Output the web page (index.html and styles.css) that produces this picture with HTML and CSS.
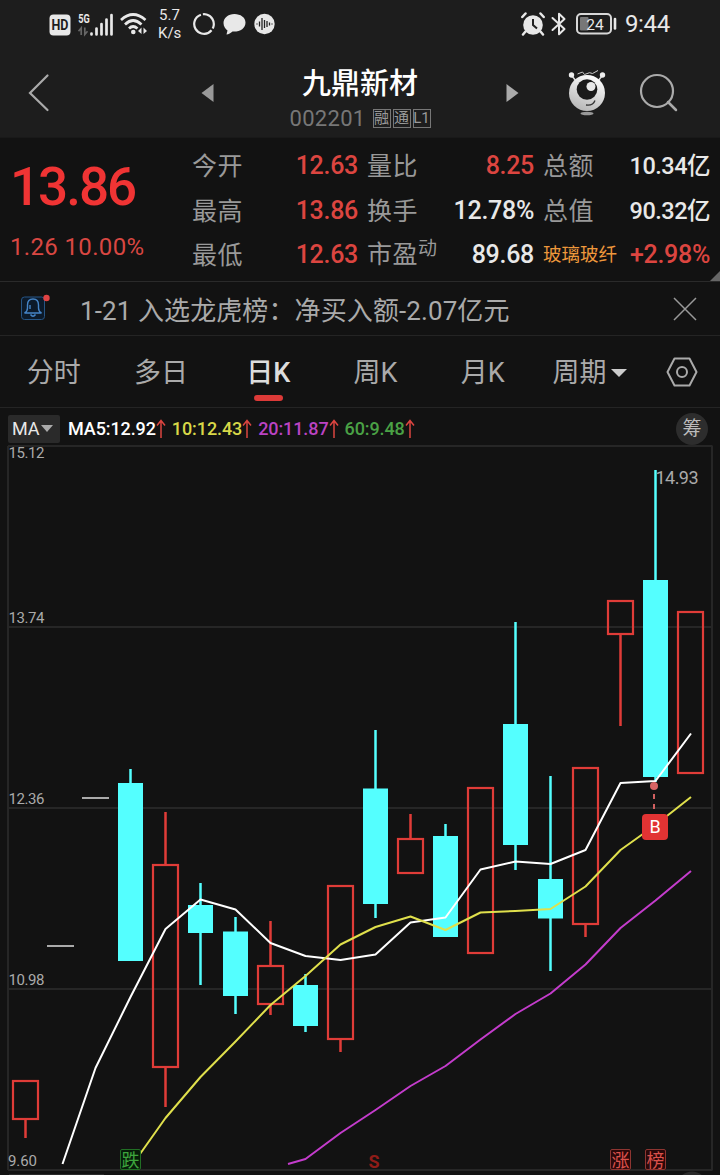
FILE: index.html
```html
<!DOCTYPE html>
<html lang="zh-CN">
<head>
    <meta charset="UTF-8">
    <meta name="viewport" content="width=device-width, initial-scale=1.0">
    <title>九鼎新材 002201</title>
    <link rel="stylesheet" href="styles.css">
</head>
<body>
    <header class="header">
        <div class="status-bar">
            <div class="status-left">
                <svg class="icon-hd" width="22" height="22" viewBox="0 0 22 22"><rect x="0.5" y="0.5" width="21" height="21" rx="4" fill="#e8e8e8"/><text x="11" y="15.7" text-anchor="middle" textLength="17" lengthAdjust="spacingAndGlyphs" font-size="14" font-weight="700" fill="#1d1d1d">HD</text></svg>
                <svg class="icon-signal" width="36" height="28" viewBox="0 -3 36 28">
                    <text x="0.3" y="10" textLength="11.500" lengthAdjust="spacingAndGlyphs" font-size="12" font-weight="700" fill="#e8e8e8">5G</text>
                    <path d="M3.2 22V15L0.5 18.2M6.8 14.5v7l2.7-3.2" stroke="#666" stroke-width="1.7" fill="none"/>
                    <path d="M13.5 20.500v1M18.500 15.500V21.500M23.500 11V21.500M28.500 6.500V21.500M33.500 2V21.500" stroke="#e8e8e8" stroke-width="2.700" stroke-linecap="round"/>
                </svg>
                <svg class="icon-wifi" width="28" height="24" viewBox="0 0 28 24">
                    <g fill="none" stroke="#e8e8e8" stroke-width="2.7"><path d="M1 8Q13 -3 25.500 8"/><path d="M5 12.500Q13 4.500 21.500 12.500"/><path d="M9 16.500Q13 12.500 17.500 16.500"/></g>
                    <circle cx="13.300" cy="20" r="2.300" fill="#e8e8e8"/>
                    <path d="M21.500 15.500v6.500l-3.500-3M23.500 22v-6.500l3.500 3.500" fill="#e8e8e8"/>
                </svg>
                <div class="net-speed">5.7<br>K/s</div>
                <svg class="icon-ring" width="22" height="24" viewBox="0 0 22 24"><circle cx="11" cy="12" r="9.800" fill="none" stroke="#e8e8e8" stroke-width="2.200" stroke-dasharray="17.500 2 36 2 4.100 0" transform="rotate(-75 11 12)"/></svg>
                <svg class="icon-chat" width="23" height="24" viewBox="0 0 23 24"><path d="M11.500 2C5 2 0.500 6 0.500 11c0 3.500 2 6 4 7.500L3.500 22.500c2 0 4.500-1.500 6-3 7.500 0.500 13-3 13-9C22.500 5.500 17.500 2 11.500 2z" fill="#e8e8e8"/></svg>
                <svg class="icon-sound" width="21" height="24" viewBox="0 0 21 24"><circle cx="10.500" cy="12" r="10.200" fill="#e8e8e8"/><path d="M3 11.500v1M5.500 9.500v5M8 6v12M10.500 8v8M13 9v6M15.500 10.500v3M18 11.500v1" stroke="#222" stroke-width="1.300"/></svg>
            </div>
            <div class="status-right">
                <svg class="icon-alarm" width="24" height="24" viewBox="0 0 24 24"><circle cx="12" cy="13" r="9.800" fill="#e8e8e8"/><path d="M4.500 1.500L1.300 5M19.500 1.500L22.700 5M4.500 19.500l-2.500 3M19.500 19.500l2.500 3" stroke="#e8e8e8" stroke-width="2.500" stroke-linecap="round"/><path d="M12 7v6l4 3.500" stroke="#222" stroke-width="2" fill="none"/></svg>
                <svg class="icon-bluetooth" width="16" height="24" viewBox="0 0 16 24"><path d="M1.500 6L13.500 17L8 22.200V1.800L13.500 7L1.500 18" fill="none" stroke="#e8e8e8" stroke-width="2" stroke-linejoin="round" stroke-linecap="round"/></svg>
                <svg class="icon-battery" width="41" height="22" viewBox="0 0 41 22"><rect x="1" y="1" width="34" height="19.500" rx="4" fill="none" stroke="#d8d8d8" stroke-width="2"/><rect x="4" y="4" width="8.500" height="13.500" rx="1" fill="#777"/><path d="M39 6v9.500" stroke="#e8e8e8" stroke-width="2.600" stroke-linecap="round"/><text x="19" y="16.500" text-anchor="middle" font-size="15.500" fill="#e8e8e8">24</text></svg>
                <span class="clock">9:44</span>
            </div>
        </div>
        <div class="title-bar">
            <svg class="back" width="22" height="40" viewBox="0 0 22 40"><path d="M19.500 2.500L2 20L19.500 37" fill="none" stroke="#aaa" stroke-width="2.200" stroke-linecap="round"/></svg>
            <svg class="prev" width="13" height="20" viewBox="0 0 13 20"><path d="M12.500 1v18L0.500 10z" fill="#999"/></svg>
            <div class="stock-title">
                <div class="stock-name">九鼎新材</div>
                <div class="stock-code"><span class="code">002201</span><span class="tag">融</span><span class="tag">通</span><span class="tag">L1</span></div>
            </div>
            <svg class="next" width="13" height="20" viewBox="0 0 13 20"><path d="M0.500 1v18L12.500 10z" fill="#aaa"/></svg>
            <svg class="mascot" width="38" height="46" viewBox="0 0 38 46">
                <defs><linearGradient id="ball" x1="0.7" y1="0" x2="0.3" y2="1"><stop offset="0" stop-color="#fff"/><stop offset="1" stop-color="#b5b5b5"/></linearGradient></defs>
                <path d="M4 6l4 5M34 6l-4 5" stroke="#ddd" stroke-width="1.500"/>
                <circle cx="3.500" cy="5" r="2.700" fill="#eee"/><circle cx="34.500" cy="5" r="2.700" fill="#eee"/>
                <path d="M9.500 4l5-2 2 2.500 5-1.800 3 .8 5.500-3" fill="none" stroke="#ccc" stroke-width="1"/>
                <circle cx="19" cy="23" r="18" fill="url(#ball)"/>
                <circle cx="19" cy="19.500" r="10.300" fill="#1a1a1a"/><circle cx="23" cy="16.500" r="4.500" fill="#e8e8e8"/>
                <path d="M18 35q7 1 9-4.500" fill="none" stroke="#333" stroke-width="1.300"/>
                <ellipse cx="19" cy="43.500" rx="6.500" ry="1.700" fill="#999"/>
            </svg>
            <svg class="search" width="40" height="40" viewBox="0 0 40 40"><circle cx="18" cy="18" r="16" fill="none" stroke="#aaa" stroke-width="2.200"/><path d="M29 29l8 8" stroke="#aaa" stroke-width="2.500" stroke-linecap="round"/></svg>
        </div>
    </header>

    <section class="quote">
        <div class="price-box">
            <div class="price">13.86</div>
            <div class="change">1.26 10.00%</div>
        </div>
        <div class="stats">
            <div class="stat"><span class="label">今开</span><span class="value red">12.63</span></div>
            <div class="stat"><span class="label">量比</span><span class="value red">8.25</span></div>
            <div class="stat"><span class="label">总额</span><span class="value money">10.34亿</span></div>
            <div class="stat"><span class="label">最高</span><span class="value red">13.86</span></div>
            <div class="stat"><span class="label">换手</span><span class="value">12.78%</span></div>
            <div class="stat"><span class="label">总值</span><span class="value money">90.32亿</span></div>
            <div class="stat"><span class="label">最低</span><span class="value red">12.63</span></div>
            <div class="stat"><span class="label">市盈<span class="sup">动</span></span><span class="value">89.68</span></div>
            <div class="stat"><span class="sector">玻璃玻纤</span><span class="value red">+2.98%</span></div>
        </div>
        <span class="corner"></span>
    </section>

    <section class="notice">
        <svg class="bell" width="30" height="30" viewBox="0 0 30 30">
            <rect x="1.500" y="5" width="23" height="22.500" rx="3" fill="#0c1a2a" stroke="#265585"/>
            <path d="M4.500 21q3-1.500 3-5v-3q0-6 5.500-6t5.500 6v3q0 3.500 3 5zM10.500 22.500q2.500 3.500 5 0M10 13v4" fill="none" stroke="#4585c8" stroke-width="1.400"/>
            <circle cx="26.500" cy="6" r="3.200" fill="#e04343"/>
        </svg>
        <span class="notice-text">1-21 入选龙虎榜：<span class="notice-detail">净买入额-2.07亿元</span></span>
        <svg class="close" width="24" height="24" viewBox="0 0 24 24"><path d="M1 1l22 22M23 1L1 23" stroke="#999" stroke-width="1.500"/></svg>
    </section>

    <nav class="tabs">
        <span class="tab">分时</span>
        <span class="tab">多日</span>
        <span class="tab active">日K</span>
        <span class="tab">周K</span>
        <span class="tab">月K</span>
        <span class="tab period">周期<i class="caret"></i></span>
        <svg class="settings" width="32" height="30" viewBox="0 0 32 30"><path d="M8.500 1.500h15L30.500 15l-7 13.500h-15L1.500 15z" fill="none" stroke="#aaa" stroke-width="2" stroke-linejoin="round"/><circle cx="16" cy="15" r="5" fill="none" stroke="#aaa" stroke-width="2"/></svg>
    </nav>

    <div class="ma-bar">
        <span class="ma-select">MA<i class="caret small"></i></span>
        <span class="ma ma5">MA5:12.92</span><svg class="up" width="10" height="20" viewBox="0 0 10 20"><path d="M5 19V2M1 6.500L5 1.500l4 5"/></svg>
        <span class="ma ma10">10:12.43</span><svg class="up" width="10" height="20" viewBox="0 0 10 20"><path d="M5 19V2M1 6.500L5 1.500l4 5"/></svg>
        <span class="ma ma20">20:11.87</span><svg class="up" width="10" height="20" viewBox="0 0 10 20"><path d="M5 19V2M1 6.500L5 1.500l4 5"/></svg>
        <span class="ma ma60">60:9.48</span><svg class="up" width="10" height="20" viewBox="0 0 10 20"><path d="M5 19V2M1 6.500L5 1.500l4 5"/></svg>
        <span class="chip">筹</span>
    </div>

    <svg class="chart" width="720" height="730" viewBox="0 445 720 730">
        <!-- grade -->
        <path class="grid" d="M8 446H712.500M8 627H712.500M8 808H712.500M8 989H712.500M8 1170H712.500M8 446V1170M712 446V1170"/>
        <path d="M9 1174.500H104" stroke="#2a2a2a"/>
        <circle cx="692" cy="1187" r="15.500" fill="#2a2a2a"/>
        <g class="axis">
            <text x="8.500" y="457.500" textLength="36">15.12</text>
            <text x="8.500" y="623" textLength="36">13.74</text>
            <text x="8.500" y="804" textLength="36">12.36</text>
            <text x="8.500" y="985" textLength="36">10.98</text>
            <text x="8" y="1166" textLength="29">9.60</text>
        </g>
        <path d="M82 798H109M47 946H74" stroke="#aaa" stroke-width="2"/>
        <!-- velas de alta -->
        <g class="rise">
            <rect x="13" y="1081" width="25" height="38"/><path d="M25.500 1120V1138"/>
            <rect x="153" y="865" width="25" height="202"/><path d="M165.500 812V864M165.500 1068V1107"/>
            <rect x="258" y="966" width="25" height="38"/><path d="M270.500 921V965M270.500 1005V1015"/>
            <rect x="328" y="886" width="25" height="153"/><path d="M340.500 1040V1052"/>
            <rect x="398" y="839" width="25" height="34"/><path d="M410.500 814V838"/>
            <rect x="468" y="788" width="25" height="165"/>
            <rect x="573" y="768" width="25" height="156"/><path d="M585.500 925V937"/>
            <rect x="608" y="601" width="25" height="33"/><path d="M620.500 635V726"/>
            <rect x="678" y="612" width="25" height="161"/>
        </g>
        <!-- velas de baixa -->
        <g class="fall">
            <rect x="118" y="783" width="25" height="178"/><path d="M130.500 769V783"/>
            <rect x="188" y="905" width="25" height="28"/><path d="M200.500 883V985"/>
            <rect x="223" y="931.500" width="25" height="64.500"/><path d="M235.500 917V1014"/>
            <rect x="293" y="985" width="25" height="41"/><path d="M305.500 974V1032"/>
            <rect x="363" y="788.500" width="25" height="115.500"/><path d="M375.500 730V918"/>
            <rect x="433" y="836" width="25" height="101"/><path d="M445.500 824V836"/>
            <rect x="503" y="724" width="25" height="121"/><path d="M515.500 622V870"/>
            <rect x="538" y="879" width="25" height="39.500"/><path d="M550.500 776V971"/>
            <rect x="643" y="580" width="25" height="197"/><path d="M655.500 470V782"/>
        </g>
        <text class="peak" x="655.500" y="484" textLength="43">14.93</text>
        <!-- medias moveis -->
        <polyline class="line" stroke="#fff" points="62.500,1164 95.500,1068 130.500,997 165.500,929 200.500,899.500 235.500,909.500 270.500,943 305.500,956 340.500,960 375.500,954.500 410.500,922.500 445.500,917.500 480.500,869.500 515.500,861.500 550.500,864 585.500,850 620.500,783 655.500,781 691,733.500"/>
        <polyline class="line" stroke="#e0e04c" points="140,1154 165.500,1118 200.500,1077 235.500,1041.500 270.500,1005 305.500,976 340.500,944.500 375.500,927 410.500,916.500 445.500,930 480.500,912.500 515.500,911 550.500,909 585.500,886.500 620.500,850 655.500,825 691,797"/>
        <polyline class="line" stroke="#c43ccc" points="288,1164 305.500,1159 340.500,1133 375.500,1110 410.500,1086 445.500,1066 480.500,1039.500 515.500,1014 550.500,993.500 585.500,964.500 620.500,928 655.500,900.500 691,871"/>
        <!-- marcadores -->
        <path d="M654 790V815" stroke="#d06060" stroke-width="2" stroke-dasharray="5 5" stroke-dashoffset="-4"/>
        <circle cx="654" cy="786" r="4" fill="#d96565"/>
        <rect x="642" y="814" width="26" height="26" rx="4" fill="#e23333"/>
        <text x="655" y="833" text-anchor="middle" font-size="18" fill="#fff">B</text>
        <g class="event">
            <rect x="120.500" y="1149.500" width="20" height="20" rx="1.500" fill="#071c09" stroke="#216e24"/><text x="130.500" y="1166.500" fill="#3da53d">跌</text>
            <rect x="610.500" y="1149.500" width="20" height="20" rx="1.500" fill="#2b0809" stroke="#8d3531"/><text x="620.500" y="1166.500" fill="#dc514b">涨</text>
            <rect x="645.500" y="1149.500" width="20" height="20" rx="1.500" fill="#2b0809" stroke="#8d3531"/><text x="655.500" y="1166.500" fill="#dc514b">榜</text>
        </g>
        <text x="374" y="1168" text-anchor="middle" font-size="18" font-weight="700" fill="#901c18">S</text>
    </svg>
</body>
</html>
```
FILE: styles.css
```css
* {
    box-sizing: border-box;
}
body {
    margin: 0;
    width: 720px;
    height: 1175px;
    overflow: hidden;
    background-color: #121212;
    color: #e8e8e8;
    font-family: Roboto, "Noto Sans CJK SC", sans-serif;
}
svg {
    display: block;
    flex-shrink: 0;
}
.header {
    height: 138px;
    background-color: #1d1d1d;
    border-bottom: 1px solid #191919;
}
.status-bar {
    height: 48px;
    display: flex;
    justify-content: space-between;
    align-items: center;
    padding: 0 50px 0 49px;
}
.status-left,
.status-right {
    display: flex;
    align-items: center;
}
.icon-hd {
    margin-top: 2px;
    margin-right: 7px;
}
.icon-signal {
    margin-right: 6px;
}
.net-speed {
    width: 23px;
    margin: 0 12px 0 10px;
    font-size: 15px;
    line-height: 18px;
    text-align: center;
    white-space: nowrap;
}
.icon-ring,
.icon-chat {
    margin-right: 8px;
}
.icon-alarm {
    margin-right: 6px;
}
.icon-bluetooth {
    margin-right: 9px;
}
.clock {
    margin-left: 8px;
    font-size: 24px;
    line-height: 24px;
    letter-spacing: -0.3px;
}
.title-bar {
    height: 89px;
    display: flex;
    align-items: center;
    padding: 0 41px 0 28px;
}
.prev {
    margin-left: 151px;
}
.stock-title {
    width: 292px;
    padding-top: 14px;
    text-align: center;
}
.stock-name {
    font-size: 29px;
    font-weight: 500;
    line-height: 38px;
    color: #fff;
}
.stock-code {
    display: flex;
    justify-content: center;
    align-items: center;
    gap: 2px;
    height: 32px;
}
.code {
    margin-right: 5px;
    font-size: 22px;
    letter-spacing: 0.3px;
    color: #777;
}
.tag {
    width: 18px;
    height: 19px;
    border: 1px solid #777;
    font-size: 15px;
    line-height: 17px;
    color: #999;
    display: flex;
    justify-content: center;
}
.mascot {
    margin-left: 49px;
}
.search {
    margin-left: 33px;
}
.quote {
    position: relative;
    height: 143px;
    display: flex;
    padding: 5px 10px 0 10px;
}
.price-box {
    width: 183px;
}
.price {
    margin-top: 15px;
    font-size: 53px;
    font-weight: 500;
    line-height: 58px;
    letter-spacing: -2px;
    color: #f03434;
}
.change {
    margin-top: 14px;
    font-size: 24px;
    line-height: 34px;
    letter-spacing: 0.35px;
    color: #d94742;
    white-space: nowrap;
}
.stats {
    display: grid;
    grid-template-columns: 166px 167px 167px;
    grid-auto-rows: 44.5px;
    column-gap: 9px;
}
.stat {
    display: flex;
    justify-content: space-between;
    align-items: center;
    padding-top: 2px;
    line-height: 36px;
    white-space: nowrap;
}
.label {
    padding-top: 2px;
    font-size: 25px;
    letter-spacing: 0.5px;
    color: #999;
}
.sup {
    font-size: 19px;
    position: relative;
    top: -8px;
}
.value {
    font-size: 25px;
    font-weight: 500;
    letter-spacing: -0.3px;
}
.money {
    font-size: 23.5px;
    letter-spacing: -0.5px;
}
.red {
    color: #dc4540;
}
.sector {
    font-size: 18.5px;
    color: #ee983c;
}
.corner {
    position: absolute;
    right: 0;
    bottom: 0;
    border: 5px solid;
    border-color: transparent #666 #666 transparent;
}
.notice {
    height: 55px;
    display: flex;
    align-items: center;
    padding: 0 23px 0 20px;
    border-top: 1px solid #2a2a2a;
    border-bottom: 1px solid #242424;
}
.bell {
    margin-top: -4px;
}
.notice-text {
    flex: 1;
    margin-left: 30px;
    padding-top: 4px;
    font-size: 26px;
    line-height: 40px;
    letter-spacing: 0.1px;
    color: #aaa;
    white-space: nowrap;
}
.tabs {
    height: 72px;
    display: flex;
    align-items: center;
    border-bottom: 1px solid #242424;
}
.tab {
    position: relative;
    width: 107.3px;
    padding-top: 2px;
    font-size: 27px;
    line-height: 40px;
    text-align: center;
    color: #aaa;
}
.active {
    font-weight: 500;
    color: #ddd;
}
.active::after {
    content: "";
    position: absolute;
    left: 39px;
    bottom: -8px;
    width: 29px;
    height: 6px;
    border-radius: 3px;
    background-color: #dc3a38;
}
.period {
    width: 130px;
    padding-left: 16px;
    display: flex;
    align-items: center;
}
.caret {
    margin-left: 5px;
    border: 8px solid transparent;
    border-top-color: #ccc;
    border-bottom: none;
}
.caret.small {
    margin-left: 1px;
    border-width: 7px 6px 0;
    border-top-color: #aaa;
}
.ma-bar {
    height: 37px;
    display: flex;
    align-items: center;
    padding: 4px 12px 0 8px;
}
.ma-select {
    width: 52px;
    height: 28px;
    display: flex;
    align-items: center;
    padding-left: 4px;
    margin-right: 8px;
    border-radius: 2px;
    background-color: #2a2a2a;
    font-size: 18px;
}
.ma {
    font-size: 18px;
    font-weight: 500;
    line-height: 28px;
    letter-spacing: -0.1px;
}
.ma5 {
    color: #fff;
}
.ma10 {
    color: #d8d848;
}
.ma20 {
    color: #bb43c3;
}
.ma60 {
    color: #4aa145;
}
.up {
    margin-right: 6px;
    fill: none;
    stroke: #dc4540;
    stroke-width: 1.5;
}
.chip {
    width: 32px;
    height: 32px;
    margin-left: auto;
    border-radius: 50%;
    background-color: #2d2d2d;
    font-size: 19px;
    line-height: 32px;
    text-align: center;
    color: #bbb;
}
.grid {
    stroke: #262626;
    stroke-width: 2;
}
.axis {
    font-size: 15px;
    fill: #aaa;
}
.peak {
    font-size: 18px;
    fill: #aaa;
}
.rise {
    fill: none;
    stroke: #e03c38;
    stroke-width: 2.2;
}
.rise path {
    stroke-width: 2.5;
}
.fall {
    fill: #54ffff;
    stroke: none;
}
.fall path {
    stroke: #54ffff;
    stroke-width: 2.5;
}
.line {
    fill: none;
    stroke-width: 2;
    stroke-linejoin: round;
}
.event text {
    font-size: 18px;
    text-anchor: middle;
}
```
